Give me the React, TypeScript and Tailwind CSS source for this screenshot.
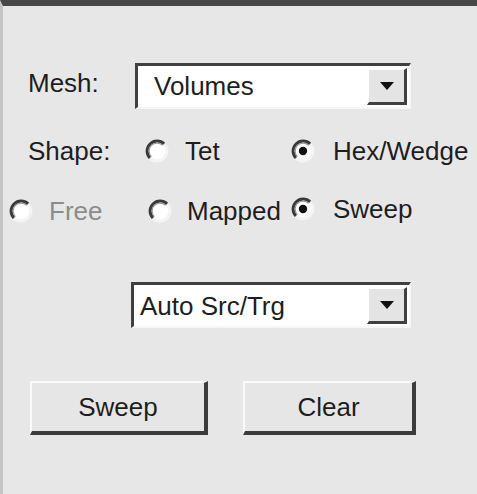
import type { ReactNode } from 'react'

/* Classic Win9x-style controls, drawn at roughly 3x scale. */

function Radio({ checked = false }: { checked?: boolean }) {
  return (
    <svg width="26" height="26" viewBox="0 0 26 26" className="shrink-0">
      <circle cx="13" cy="13" r="10" fill="#ffffff" />
      {/* light half (bottom-right) */}
      <path d="M 20.07 5.93 A 10 10 0 0 1 5.93 20.07" fill="none" stroke="#f4f4f4" strokeWidth="3" />
      {/* dark half (top-left) */}
      <path d="M 5.93 20.07 A 10 10 0 0 1 20.07 5.93" fill="none" stroke="#3a3a3a" strokeWidth="3" />
      <path d="M 7.4 18.6 A 7.9 7.9 0 0 1 18.6 7.4" fill="none" stroke="#9a9a9a" strokeWidth="1.2" />
      {checked && <circle cx="13" cy="13" r="4.2" fill="#111111" />}
    </svg>
  )
}

function RadioItem({ label, checked, disabled, gap, width }: { label: string; checked?: boolean; disabled?: boolean; gap: string; width?: string }) {
  return (
    <div className={`flex items-center ${gap} ${width ?? ''}`}>
      <Radio checked={checked} />
      <span className={disabled ? 'text-[#8c8c8c]' : 'text-[#1e1e1e]'}>{label}</span>
    </div>
  )
}

function Combo({ value, width, pad }: { value: string; width: string; pad: string }) {
  return (
    <div className={`${width} h-[46px] flex border-t-[3px] border-l-[3px] border-t-[#404040] border-l-[#404040] border-b-2 border-r-2 border-b-[#f6f6f6] border-r-[#f6f6f6] bg-white`}>
      <div className={`flex-1 flex items-center ${pad} text-[#1e1e1e] whitespace-nowrap`}>{value}</div>
      <ComboButton />
    </div>
  )
}

function ComboButton() {
  return (
    <div className="w-[40px] my-[2px] mr-[2px] flex items-center justify-center bg-[#e4e4e4] border-t-2 border-l-2 border-t-white border-l-white border-b-[3px] border-r-[3px] border-b-[#404040] border-r-[#404040]">
      <svg width="14" height="8" viewBox="0 0 14 8">
        <polygon points="0,0 14,0 7,8" fill="#111111" />
      </svg>
    </div>
  )
}

function Button({ children, width }: { children: ReactNode; width: string }) {
  return (
    <div className={`${width} h-[54px] flex items-center justify-center bg-[#e6e6e6] border-t-2 border-l-2 border-t-[#fafafa] border-l-[#fafafa] border-b-[4px] border-r-[4px] border-b-[#3c3c3c] border-r-[#3c3c3c] text-[#1e1e1e]`}>
      {children}
    </div>
  )
}

export default function App() {
  return (
    <div
      className="w-[477px] h-[494px] overflow-hidden bg-[#e7e7e7] border-t-[6px] border-t-[#474747] border-l-[3px] border-l-[#c4c4c4] text-[26px] leading-none"
      style={{ fontFamily: '"Liberation Sans", Arial, sans-serif' }}
    >
      <div className="flex flex-col">
        {/* Mesh row */}
        <div className="mt-[57px] flex items-center h-[45px]">
          <span className="ml-[25px] w-[107px] text-[#1e1e1e] -mt-[6px]">Mesh:</span>
          <Combo value="Volumes" width="w-[276px]" pad="pl-[16px]" />
        </div>

        {/* Shape row */}
        <div className="mt-[30px] flex items-center h-[26px]">
          <span className="ml-[25px] w-[116px] text-[#1e1e1e]">Shape:</span>
          <RadioItem label="Tet" gap="gap-[15px]" width="w-[146px]" />
          <RadioItem label="Hex/Wedge" checked gap="gap-[17px]" />
        </div>

        {/* Method row */}
        <div className="mt-[34px] flex items-center h-[26px]">
          <div className="ml-[5px]" />
          <RadioItem label="Free" disabled gap="gap-[15px]" width="w-[139px]" />
          <RadioItem label="Mapped" gap="gap-[14px]" width="w-[143px]" />
          <div className="-mt-[5px]">
            <RadioItem label="Sweep" checked gap="gap-[17px]" />
          </div>
        </div>

        {/* Source/target */}
        <div className="mt-[58px] flex">
          <div className="ml-[128px]" />
          <Combo value="Auto Src/Trg" width="w-[280px]" pad="pl-[6px]" />
        </div>

        {/* Buttons */}
        <div className="mt-[53px] flex">
          <div className="ml-[27px]" />
          <Button width="w-[178px]">Sweep</Button>
          <div className="ml-[35px]" />
          <Button width="w-[173px]">Clear</Button>
        </div>
      </div>
    </div>
  )
}
